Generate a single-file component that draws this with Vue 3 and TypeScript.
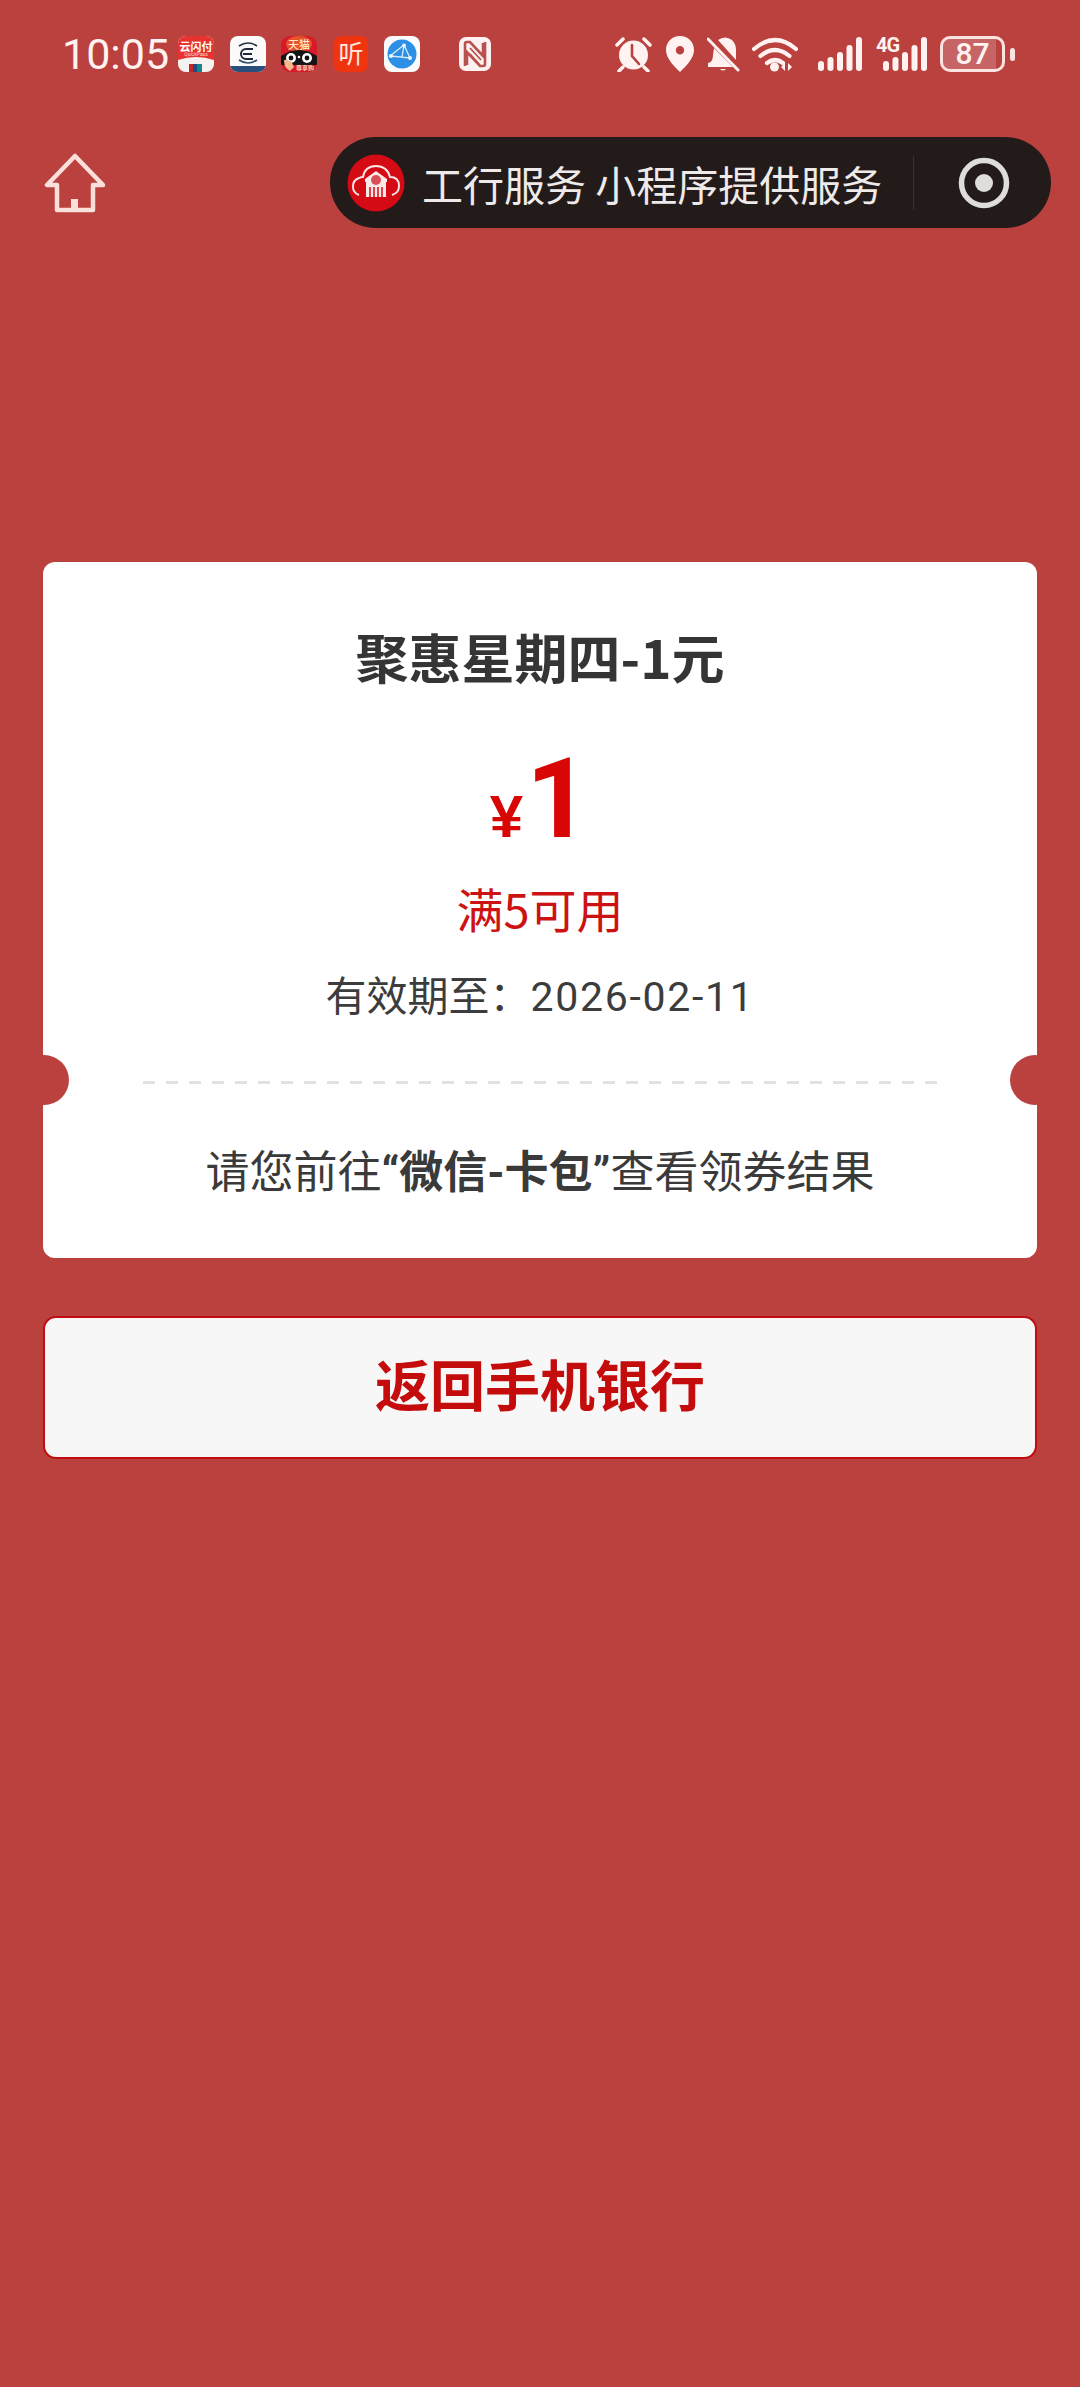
<script setup lang="ts">
const barSlots: number[][] = [
  [0, 24],
  [9.500, 20],
  [19, 15],
  [28.500, 8],
  [38, 0],
]
</script>

<template>
  <div class="page">
    <div class="status">
      <span class="time">10:05</span>
      <svg class="app a1" width="36" height="36" viewBox="0 0 36 36">
        <defs><clipPath id="c1"><rect width="36" height="36" rx="8" /></clipPath></defs>
        <g clip-path="url(#c1)">
          <rect width="36" height="36" fill="#f5f1f0" />
          <path d="M0 0h36v24q-18-6-36 0z" fill="#e8322d" />
          <text x="18" y="15" class="t1">云闪付</text>
          <text x="18" y="20" class="t1b">QuickPass</text>
          <rect x="11" y="28" width="5" height="8" fill="#c8222a" />
          <rect x="15" y="28" width="5" height="8" fill="#1c4f7c" />
          <rect x="19" y="28" width="5" height="8" fill="#15848c" />
        </g>
      </svg>
      <svg class="app a2" width="36" height="36" viewBox="0 0 36 36">
        <defs><clipPath id="c2"><rect width="36" height="36" rx="8" /></clipPath></defs>
        <g clip-path="url(#c2)">
          <rect width="36" height="36" fill="#fbfbfb" />
          <path d="M9 10q9-6 18 0" fill="none" stroke="#27313f" stroke-width="1.600" />
          <path d="M9 24q9 6 18 0" fill="none" stroke="#2d4a70" stroke-width="1.600" />
          <path d="M23 13h-7a5 5 0 0 0 0 10h7M13 18h9" fill="none" stroke="#1f2b3a" stroke-width="2" />
          <rect y="30" width="36" height="6" fill="#2a4f7d" />
        </g>
      </svg>
      <svg class="app a3" width="36" height="36" viewBox="0 0 36 36">
        <defs><clipPath id="c3"><rect width="36" height="36" rx="9" /></clipPath></defs>
        <g clip-path="url(#c3)">
          <rect width="36" height="36" fill="#d8192a" />
          <ellipse cx="18" cy="8" rx="13" ry="8" fill="#e8522a" />
          <text x="18" y="13" class="t3">天猫</text>
          <path d="M0 20q18-12 36 0v9H0z" fill="#141414" />
          <circle cx="10" cy="22" r="5" fill="#fff" />
          <circle cx="26" cy="22" r="5" fill="#fff" />
          <circle cx="10" cy="22" r="2.400" fill="#111" />
          <circle cx="26" cy="22" r="2.400" fill="#111" />
          <circle cx="18" cy="21" r="1.300" fill="#fff" />
          <path d="M3 24q5-1 8 3l2 4-4 4q-6-3-6-11z" fill="#f6b88d" />
          <text x="24" y="34" class="t3b">尊享购</text>
        </g>
      </svg>
      <svg class="app a4" width="34" height="36" viewBox="0 0 34 36" overflow="visible">
        <rect width="34" height="36" rx="7" fill="#f0340f" />
        <text x="17" y="27" class="t4">听</text>
      </svg>
      <svg class="app a5" width="36" height="36" viewBox="0 0 36 36">
        <rect width="36" height="36" rx="8" fill="#fbfbfb" />
        <circle cx="18" cy="18" r="14.500" fill="#2e8fe6" />
        <path d="M6 20l14-11 6 13zM20 9l-2 12" fill="none" stroke="#d9edfb" stroke-width="1.300" />
        <circle cx="20" cy="9.500" r="2" fill="#eaf5fd" />
        <circle cx="26" cy="22" r="2" fill="#eaf5fd" />
        <circle cx="7" cy="20" r="2" fill="#eaf5fd" />
      </svg>
      <svg class="app a6" width="32" height="34" viewBox="0 0 32 34">
        <rect width="32" height="34" rx="7" fill="#fdf2f1" />
        <path d="M6 29V7q0-2 2-2h3l13 14V6M26 5v22q0 2-2 2h-3L8 15v13" fill="none" stroke="#b9524f" stroke-width="2.600" />
        <path d="M11 11l11 12M11 17l9 10" fill="none" stroke="#b9524f" stroke-width="1.800" />
      </svg>

      <svg class="sys s1" width="37" height="36" viewBox="0 0 37 36">
        <circle cx="18.500" cy="19" r="14.500" fill="#fff2f0" />
        <path d="M2 9l6-6M35 9l-6-6M8 31l-4 4M29 31l4 4" stroke="#fff2f0" stroke-width="3.500" stroke-linecap="round" />
        <path d="M17 9v11l7 8" fill="none" stroke="#ba413e" stroke-width="2.600" stroke-linecap="round" />
      </svg>
      <svg class="sys s2" width="28" height="36" viewBox="0 0 28 36">
        <path fill-rule="evenodd" fill="#fff2f0" d="M14 0C6 0 0 6 0 14c0 9 9 17 14 22 5-5 14-13 14-22C28 6 22 0 14 0zM14 10a4.200 4.200 0 1 1 0 8.400a4.200 4.200 0 0 1 0-8.400z" />
      </svg>
      <svg class="sys s3" width="33" height="36" viewBox="0 0 33 36">
        <path fill="#fff2f0" d="M11 4q7-5 14 0 4 4 4 10v10zM7 12l19 19H1v-4q5-1 5-8z" />
        <path d="M13 33q3 3 6 0z" fill="#fff2f0" />
        <path d="M1 3l30 31" stroke="#fff2f0" stroke-width="3" stroke-linecap="round" />
      </svg>
      <svg class="sys s4" width="46" height="36" viewBox="0 0 46 36">
        <path d="M2 13q21-18 42 0M8.500 20q14.500-12 29 0M15 27q8-6 16 0" fill="none" stroke="#fff2f0" stroke-width="4.200" stroke-linecap="round" />
        <circle cx="22.500" cy="31" r="4.500" fill="#fff2f0" />
        <path d="M33 27v8l-4-4zM36 27v8l4-4z" fill="#fff2f0" />
      </svg>
      <svg class="sys s5" width="44" height="36" viewBox="0 0 44 36">
        <rect v-for="b in barSlots" :key="b[0]" :x="b[0]" :y="b[1] + 1" width="6" :height="34 - b[1]" rx="3" fill="#fff2f0" />
      </svg>
      <svg class="sys s6" width="51" height="36" viewBox="0 0 51 36" overflow="visible">
        <text x="0" y="16" class="t4g">4G</text>
        <rect v-for="b in barSlots" :key="b[0]" :x="b[0] + 7" :y="b[1] + 1" width="6" :height="34 - b[1]" rx="3" fill="#fff2f0" />
      </svg>
      <div class="battery">
        <div class="batt-body"><span class="batt-num">87</span></div>
        <div class="batt-nub"></div>
      </div>
    </div>

    <div class="topbar">
      <svg class="home" width="62" height="60" viewBox="0 0 62 60">
        <path d="M31 3L3 32h10v25h36V32h10z" fill="none" stroke="#fbdfdb" stroke-width="4.500" stroke-linejoin="round" />
        <rect x="27" y="46" width="7" height="11" fill="#fbdfdb" />
      </svg>
      <div class="capsule">
        <svg class="logo" width="58" height="58" viewBox="0 0 58 58">
          <circle cx="29" cy="29" r="28.500" fill="#d40a14" />
          <path d="M12 41a9 9 0 0 1 0-17q2-1 4-1 2-11 13-11 11 0 14 11 9 0 9 9 0 7-7 9" fill="none" stroke="#fbe9e8" stroke-width="1.900" />
          <path d="M18 25l11-8 11 8v3H18z" fill="#fbe9e8" />
          <rect x="19" y="27" width="20" height="16" fill="#fbe9e8" />
          <circle cx="29" cy="26" r="5" fill="#d9505a" />
          <path d="M23 33v10M27 33v10M31 33v10M35 33v10" stroke="#d40a14" stroke-width="1.500" />
        </svg>
        <span class="cap-text">工行服务 小程序提供服务</span>
        <div class="cap-div"></div>
        <svg class="target" width="52" height="52" viewBox="0 0 52 52">
          <circle cx="26" cy="26" r="22.500" fill="none" stroke="#dfdcdc" stroke-width="5.500" />
          <circle cx="26" cy="26" r="9" fill="#dfdcdc" />
        </svg>
      </div>
    </div>

    <div class="card">
      <span class="notch left"></span>
      <span class="notch right"></span>
      <div class="title">聚惠星期四-1元</div>
      <div class="amount"><span class="yen">¥</span><span class="num">1</span></div>
      <div class="cond">满5可用</div>
      <div class="expire">有效期至：<span class="date">2026-02-11</span></div>
      <div class="dash"></div>
      <div class="hint">请您前往<b>“微信-卡包”</b>查看领券结果</div>
    </div>

    <div class="btn">返回手机银行</div>
  </div>
</template>

<style scoped>
.page {
  width: 1080px;
  height: 2387px;
  background: #ba413e;
  overflow: hidden;
  font-family: Roboto, "Noto Sans CJK SC", sans-serif;
  color: #333;
}
.status {
  display: flex;
  align-items: center;
  height: 36px;
  padding: 36px 0 0 62px;
}
.time {
  width: 116px;
  font-size: 43px;
  line-height: 36px;
  color: #fff2f0;
  flex: none;
}
.app, .sys { flex: none; display: block; }
.a2 { margin-left: 16px; }
.a3 { margin-left: 15px; }
.a4 { margin-left: 17px; }
.a5 { margin-left: 16px; }
.a6 { margin-left: 39px; }
.s1 { margin-left: 124px; }
.s2 { margin-left: 14px; }
.s3 { margin-left: 13px; }
.s4 { margin-left: 12px; }
.s5 { margin-left: 20px; }
.s6 { margin-left: 14px; }
.t1 { font: 700 11px "Noto Sans CJK SC", sans-serif; fill: #fff; text-anchor: middle; }
.t1b { font: 400 5px Roboto, sans-serif; fill: #ffd8d0; text-anchor: middle; }
.t3 { font: 500 11px "Noto Sans CJK SC", sans-serif; fill: #ffe9c8; text-anchor: middle; }
.t3b { font: 500 6px "Noto Sans CJK SC", sans-serif; fill: #ffe9c8; text-anchor: middle; }
.t4 { font: 400 25px "Noto Sans CJK SC", sans-serif; fill: #ffe8e0; text-anchor: middle; }
.t4g { font: 700 20px Roboto, sans-serif; fill: #fff2f0; letter-spacing: -1px; }
.battery {
  display: flex;
  align-items: center;
  margin-left: 13px;
  flex: none;
}
.batt-body {
  width: 65px;
  height: 36px;
  box-sizing: border-box;
  border: 3px solid #fbe3e0;
  border-radius: 10px;
  background: linear-gradient(90deg, #c76566 0 90%, transparent 90%);
  background-clip: padding-box;
  display: flex;
  align-items: center;
  justify-content: center;
}
.batt-num {
  font: 500 30px/30px Roboto, sans-serif;
  color: #fff2f0;
}
.batt-nub {
  width: 5px;
  height: 13px;
  margin-left: 5px;
  border-radius: 3px;
  background: #fbe3e0;
}
.topbar {
  display: flex;
  align-items: center;
  justify-content: space-between;
  height: 91px;
  margin-top: 65px;
  padding: 0 29px 0 44px;
}
.home { display: block; flex: none; }
.capsule {
  display: flex;
  align-items: center;
  width: 721px;
  height: 91px;
  box-sizing: border-box;
  padding-left: 17px;
  border-radius: 46px;
  background: #231a1a;
}
.logo, .target { display: block; flex: none; }
.cap-text {
  margin-left: 17px;
  font-family: "Noto Sans CJK SC", sans-serif;
  font-size: 41px;
  line-height: 50px;
  color: #eeeaea;
  white-space: nowrap;
  flex: none;
  width: 460px;
}
.cap-div {
  width: 1px;
  height: 54px;
  margin-left: 31px;
  background: #3d3232;
  flex: none;
}
.target { margin-left: 44px; }
.card {
  position: relative;
  display: flex;
  flex-direction: column;
  align-items: center;
  box-sizing: border-box;
  width: 994px;
  height: 696px;
  margin: 334px 0 0 43px;
  padding-top: 64px;
  border-radius: 12px;
  background: #fff;
}
.notch {
  position: absolute;
  top: 493px;
  width: 50px;
  height: 50px;
  border-radius: 50%;
  background: #ba413e;
}
.notch.left { left: -24px; }
.notch.right { right: -23px; }
.title {
  font-family: "Noto Sans CJK SC", sans-serif;
  font-size: 53px;
  font-weight: 700;
  line-height: 60px;
  color: #353535;
}
.amount {
  display: flex;
  align-items: baseline;
  height: 120px;
  margin-top: 53px;
  line-height: 120px;
  color: #d90606;
  font-family: Roboto, sans-serif;
  font-weight: 700;
}
.yen { font-size: 60px; margin-right: 3px; font-family: "Liberation Sans", sans-serif; }
.num { font-size: 112px; }
.cond {
  margin-top: 21px;
  font-family: "Noto Sans CJK SC", sans-serif;
  font-size: 47px;
  line-height: 56px;
  color: #cc1212;
}
.expire {
  margin-top: 33px;
  font-family: Roboto, "Noto Sans CJK SC", sans-serif;
  font-size: 41px;
  line-height: 56px;
  color: #3c3c3c;
}
.date { letter-spacing: 1.700px; }
.dash {
  width: 795px;
  height: 3px;
  margin-top: 56px;
  background: repeating-linear-gradient(90deg, #e2e2e2 0 12px, transparent 12px 23px);
}
.hint {
  margin-top: 59px;
  font-family: Roboto, "Noto Sans CJK SC", sans-serif;
  font-size: 44px;
  line-height: 60px;
  color: #3a3a3a;
  white-space: nowrap;
}
.hint b { font-weight: 700; }
.btn {
  box-sizing: border-box;
  display: flex;
  align-items: center;
  justify-content: center;
  width: 994px;
  height: 143px;
  margin: 58px 0 0 43px;
  padding-bottom: 12px;
  border: 2.500px solid #c10c10;
  border-radius: 13px;
  background: #f7f7f7;
  font-family: "Noto Sans CJK SC", sans-serif;
  font-size: 55px;
  font-weight: 700;
  color: #c40c0c;
}
</style>

<style>
html, body { margin: 0; padding: 0; }
</style>
